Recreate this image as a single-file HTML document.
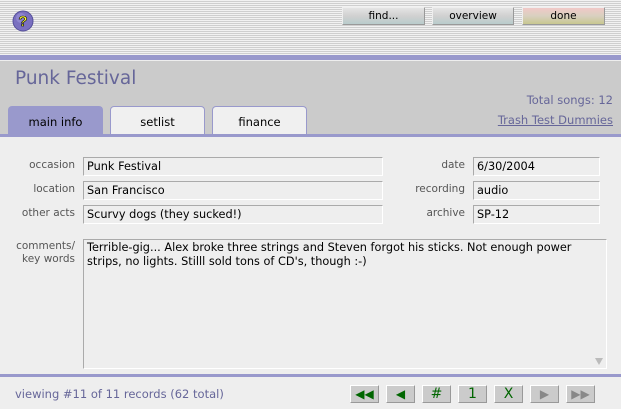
<!DOCTYPE html>
<html><head><style>
*{margin:0;padding:0;box-sizing:border-box}
body{width:621px;height:409px;overflow:hidden;background:#eee;font-family:"DejaVu Sans","Liberation Sans",sans-serif;font-size:10px;color:#000;position:relative}
.abs{position:absolute}
#top{left:0;top:0;width:621px;height:55px;background:repeating-linear-gradient(#f2f2f2 0 1px,#cfcfcf 1px 2px)}
.btn{top:7px;height:18px;border:1px solid #999;border-top-color:#eee;border-left-color:#eee;background:linear-gradient(#e4e4e4,#d0d0d0 50%,#b8cccc);text-align:center;line-height:16px;font-size:10.5px}
#band{left:0;top:55px;width:621px;height:5px;background:#9999cc}
#gray{left:0;top:61px;width:621px;height:74px;background:#cbcbcb}
.tab{top:106px;height:29px;border:1px solid #9999cc;border-bottom:none;border-radius:4px 4px 0 0;background:#f0f0f0;text-align:center;line-height:30px;font-size:11.5px}
#tabline{left:0;top:134px;width:621px;height:3px;background:#9999cc}
.lbl{color:#555;text-align:right;width:72px;left:3px;font-size:10.5px}
.fld{height:19px;border:1px solid #aaa;border-right-color:#fff;border-bottom-color:#fff;background:#eee;padding-left:3px;line-height:17px;font-size:11.3px}
.nb{top:385px;width:29px;height:18px;background:#cbcbcb;border:1px solid #999;border-top-color:#fff;border-left-color:#fff;color:#060;text-align:center;line-height:16px;font-size:12px}
</style></head><body>
<div id="top" class="abs"></div>
<svg class="abs" style="left:12px;top:10px" width="22" height="22"><circle cx="11" cy="11" r="10" fill="#7a70c0" stroke="#55509a"/><circle cx="9" cy="8" r="5" fill="#9c94d8" opacity=".6"/><text x="11" y="16" text-anchor="middle" font-family="Liberation Sans" font-weight="bold" font-size="15" fill="#ff3" stroke="#000" stroke-width=".6">?</text></svg>
<div class="abs btn" style="left:342px;width:83px">find...</div>
<div class="abs btn" style="left:432px;width:82px">overview</div>
<div class="abs btn" style="left:522px;width:83px;background:linear-gradient(#f0c8c8,#d8d0c0 50%,#c8c890)">done</div>
<div id="band" class="abs"></div>
<div id="gray" class="abs"></div>
<div class="abs" style="left:15px;top:68px;font-size:18.5px;color:#666699">Punk Festival</div>
<div class="abs" style="right:8px;top:93px;font-size:11.5px;color:#666699">Total songs: 12</div>
<div class="abs" style="right:8px;top:113px;font-size:11.5px;color:#666699;text-decoration:underline">Trash Test Dummies</div>
<div class="abs tab" style="left:8px;width:95px;background:#9999cc">main info</div>
<div class="abs tab" style="left:110px;width:95px">setlist</div>
<div class="abs tab" style="left:212px;width:95px">finance</div>
<div id="tabline" class="abs"></div>
<div class="abs lbl" style="top:159px">occasion</div>
<div class="abs lbl" style="top:183px">location</div>
<div class="abs lbl" style="top:207px">other acts</div>
<div class="abs fld" style="left:83px;top:157px;width:300px">Punk Festival</div>
<div class="abs fld" style="left:83px;top:181px;width:300px">San Francisco</div>
<div class="abs fld" style="left:83px;top:205px;width:300px">Scurvy dogs (they sucked!)</div>
<div class="abs lbl" style="top:159px;left:393px">date</div>
<div class="abs lbl" style="top:183px;left:393px">recording</div>
<div class="abs lbl" style="top:207px;left:393px">archive</div>
<div class="abs fld" style="left:473px;top:157px;width:127px">6/30/2004</div>
<div class="abs fld" style="left:473px;top:181px;width:127px">audio</div>
<div class="abs fld" style="left:473px;top:205px;width:127px">SP-12</div>
<div class="abs lbl" style="top:240px;line-height:13px">comments/<br>key words</div>
<div class="abs fld" style="left:83px;top:239px;width:524px;height:130px;line-height:14px;padding-top:1px;padding-right:30px">Terrible-gig... Alex broke three strings and Steven forgot his sticks. Not enough power strips, no lights. Stilll sold tons of CD's, though :-)</div>
<div class="abs" style="left:595px;top:358px;width:0;height:0;border-left:4px solid transparent;border-right:4px solid transparent;border-top:7px solid #bbb"></div>
<div class="abs" style="left:0;top:374px;width:621px;height:3px;background:#9999cc"></div>
<div class="abs" style="left:15px;top:387px;color:#666699;font-size:11.5px">viewing #11 of 11 records (62 total)</div>
<div class="abs nb" style="left:350px">◀◀</div>
<div class="abs nb" style="left:386px">◀</div>
<div class="abs nb" style="left:422px;font-size:14px">#</div>
<div class="abs nb" style="left:458px;font-size:14px">1</div>
<div class="abs nb" style="left:494px;font-size:14px">X</div>
<div class="abs nb" style="left:530px;color:#888">▶</div>
<div class="abs nb" style="left:566px;color:#888">▶▶</div>
</body></html>
